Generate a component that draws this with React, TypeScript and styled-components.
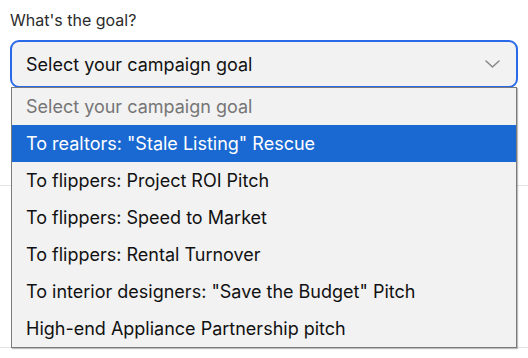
import { FunctionComponent } from 'react';
import styled, { createGlobalStyle, css } from 'styled-components';

const GlobalStyle = createGlobalStyle`
  html, body {
    margin: 0;
    padding: 0;
    background: #ffffff;
  }

  body {
    font-family: Inter, "Noto Sans", "Liberation Sans", sans-serif;
    -webkit-font-smoothing: antialiased;
  }
`;

const GOALS = [
  'To realtors: "Stale Listing" Rescue',
  'To flippers: Project ROI Pitch',
  'To flippers: Speed to Market',
  'To flippers: Rental Turnover',
  'To interior designers: "Save the Budget" Pitch',
  'High-end Appliance Partnership pitch',
];

const Page = styled.div`
  width: 528px;
  height: 358px;
  overflow: hidden;
  box-sizing: border-box;
  padding-top: 11px;
`;

const Field = styled.div`
  padding: 0 10px;
`;

const Label = styled.div`
  font-size: 16px;
  line-height: 19px;
  color: #2b2b2b;
  margin-bottom: 10px;
`;

const SelectWrap = styled.div`
  position: relative;
  width: 508px;
`;

const SelectBox = styled.div`
  box-sizing: border-box;
  height: 48px;
  display: flex;
  align-items: center;
  justify-content: space-between;
  padding: 0 16px 0 14px;
  background: #f2f2f2;
  border: 2px solid #2a6ae9;
  border-radius: 9px;
  font-size: 18px;
  color: #111111;
`;

const Chevron = styled.svg`
  width: 15px;
  height: 8px;
  display: block;
`;

const Menu = styled.div`
  position: absolute;
  top: 47px;
  left: 1px;
  width: 506px;
  box-sizing: border-box;
  background: #f2f2f2;
  border: 1px solid #7a7a7a;
  box-shadow: 1px 1px 1px rgba(0, 0, 0, 0.25);
  z-index: 2;
`;

const Option = styled.div<{ placeholder?: boolean, active?: boolean }>`
  height: 37px;
  display: flex;
  align-items: center;
  padding-left: 14px;
  font-size: 18px;
  color: #111111;
  white-space: nowrap;

  ${({ placeholder }) => placeholder && css`
    color: #767676;
  `}

  ${({ active }) => active && css`
    background: #1a69d2;
    color: #ffffff;
  `}
`;

const Divider = styled.div<{ offset: number }>`
  height: 1px;
  background: #e3e3e3;
  margin-top: ${({ offset }) => offset}px;
`;

export const App: FunctionComponent = () => (
  <>
    <GlobalStyle />
    <Page>
      <Field>
        <Label>What&apos;s the goal?</Label>
        <SelectWrap>
          <SelectBox>
            <span>Select your campaign goal</span>
            <Chevron viewBox="0 0 15 8" fill="none">
              <path d="M1 1l6.5 6 6.5-6" stroke="#8a8a8a" strokeWidth="1.6" strokeLinecap="round" strokeLinejoin="round" />
            </Chevron>
          </SelectBox>
          <Menu>
            <Option placeholder>Select your campaign goal</Option>
            {GOALS.map((goal, i) => (
              <Option key={goal} active={i === 0}>{goal}</Option>
            ))}
          </Menu>
        </SelectWrap>
      </Field>
      <Divider offset={97} />
      <Divider offset={161} />
    </Page>
  </>
);

export default App;
